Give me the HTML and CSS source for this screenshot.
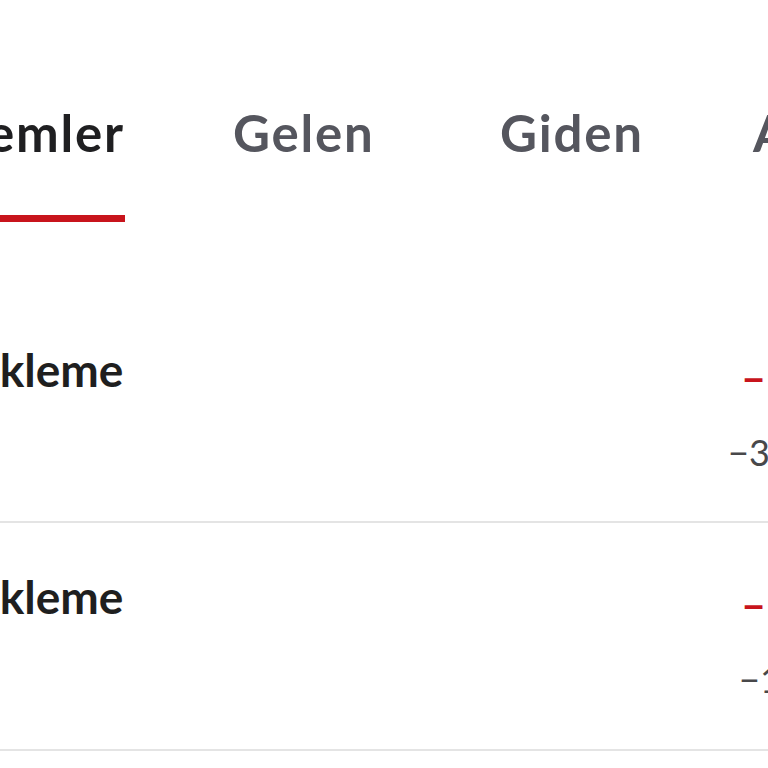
FILE: index.html
```html
<!DOCTYPE html>
<html lang="tr">
<head>
<meta charset="utf-8">
<title>İşlemler</title>
<link rel="stylesheet" href="styles.css">
</head>
<body>
<div class="screen">
  <nav class="tabs">
    <div class="tab-cell"><span class="tab active">İşlemler</span></div>
    <div class="tab-cell"><span class="tab">Gelen</span></div>
    <div class="tab-cell"><span class="tab">Giden</span></div>
    <div class="tab-cell"><span class="tab">Askıda</span></div>
  </nav>
  <ul class="list">
    <li class="row">
      <div class="title">Yükleme</div>
      <div class="amounts">
        <div class="amount">−350,00 TL</div>
        <div class="sub sub-wide">−350,00 TL</div>
      </div>
    </li>
    <li class="row">
      <div class="title">Yükleme</div>
      <div class="amounts">
        <div class="amount">−150,00 TL</div>
        <div class="sub sub-narrow">−150,00 TL</div>
      </div>
    </li>
  </ul>
</div>
</body>
</html>
```
FILE: styles.css
```css
html, body {
  margin: 0;
  padding: 0;
  background: #ffffff;
  overflow: hidden;
}

body {
  font-family: Lato, "Noto Sans", "Liberation Sans", sans-serif;
  width: 768px;
  height: 768px;
}

.screen {
  width: 1200px;
  margin-left: -52px;
}

.tabs {
  display: grid;
  grid-template-columns: 301px 267px 253px auto;
  margin-left: -16px;
  padding-top: 103px;
}

.tab-cell {
  display: flex;
}

.tab {
  display: inline-block;
  font-size: 51px;
  line-height: 60px;
  font-weight: 700;
  letter-spacing: 1.8px;
  color: #55565e;
  padding-bottom: 52px;
  border-bottom: 7px solid transparent;
  white-space: nowrap;
}

.tab.active {
  color: #1f1f21;
  border-bottom-color: #c8141c;
}

.list {
  list-style: none;
  margin: 74px 0 0 0;
  padding: 0;
}

.row {
  display: flex;
  align-items: flex-start;
  padding-top: 46px;
  padding-bottom: 47px;
  border-bottom: 2px solid #e4e4e4;
}

.row + .row {
  padding-bottom: 48px;
}

.title {
  flex: 0 0 794px;
  font-size: 46px;
  line-height: 56px;
  font-weight: 700;
  color: #1f1f1f;
  white-space: nowrap;
}

.amounts {
  display: flex;
  flex-direction: column;
  align-items: flex-start;
}

.amount {
  margin-top: 7px;
  font-size: 40px;
  line-height: 60px;
  font-weight: 700;
  letter-spacing: 5px;
  color: #c8141c;
  white-space: nowrap;
}

.sub {
  margin-top: 21px;
  font-size: 36px;
  line-height: 44px;
  font-weight: 400;
  color: #48484a;
  white-space: nowrap;
}

.sub-wide {
  margin-left: -14px;
}

.sub-narrow {
  margin-left: -3px;
}
```
